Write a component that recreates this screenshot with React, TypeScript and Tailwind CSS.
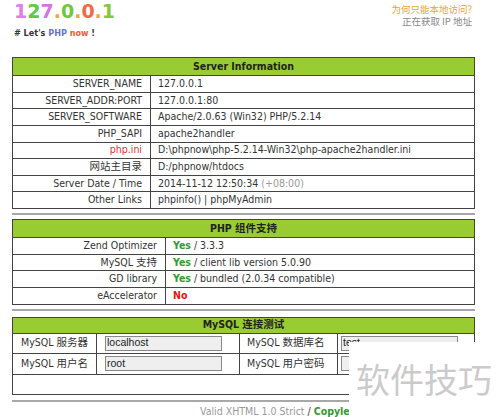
import React from "react";

const F = "font-['DejaVu_Sans_Condensed','DejaVu_Sans','Noto_Sans_CJK_SC',sans-serif]";

function Row({ label, children, labelClass = "", w }: { label: React.ReactNode; children: React.ReactNode; labelClass?: string; w: string }) {
  return (
    <div className="flex h-[16.625px] border-t border-[#444]">
      <div className={`${w} shrink-0 border-r border-[#444] flex items-center justify-end pr-[8px] ${labelClass}`}>{label}</div>
      <div className="flex-1 flex items-center pl-[7px] whitespace-nowrap">{children}</div>
    </div>
  );
}

function Header({ children }: { children: React.ReactNode }) {
  return (
    <div className="h-[17px] bg-[#99cc33] flex items-center justify-center font-bold text-[#222]">{children}</div>
  );
}

function Hr() {
  return <div className="h-[2px] bg-[#a8a8a8] w-[463px]" />;
}

function FakeInput({ value }: { value: string }) {
  return (
    <div className="h-[15px] w-[117px] border border-[#888] bg-[#efefef] flex items-center pl-[1px] font-['Liberation_Sans',Arial,sans-serif] text-[10.5px] text-[#222]">
      {value}
    </div>
  );
}

export default function App() {
  const yes = <span className="font-bold text-[#339933]">Yes</span>;
  return (
    <div className={`relative w-[500px] h-[417px] overflow-hidden bg-white text-[#333] text-[10.5px] ${F}`}>
      <div className="pl-[12px] w-[475px]">
        {/* top */}
        <div className="flex justify-between h-[57px]">
          <div className="pl-[2px]">
            <div className="font-['DejaVu_Sans',sans-serif] font-bold text-[19px] leading-[19px] mt-[2px]">
              <span className="text-[#e07ee6]">1</span>
              <span className="text-[#5cc94a]">2</span>
              <span className="text-[#d673e0]">7</span>
              <span className="text-[#f0a83a]">.</span>
              <span className="text-[#72c83a]">0</span>
              <span className="text-[#f0a83a]">.</span>
              <span className="text-[#f06a48]">0</span>
              <span className="text-[#f0a83a]">.</span>
              <span className="text-[#86c83a]">1</span>
            </div>
            <div className="font-bold text-[9px] mt-[6px] text-[#333]">
              # Let's <span className="text-[#6675b8]">PHP</span> <span className="text-[#ee5a38]">now</span> !
            </div>
          </div>
          <div className="flex flex-col items-end pr-[3px] pt-[3px] font-['Noto_Sans_CJK_SC',sans-serif] text-[9.5px]">
            <div className="h-[12px] leading-[12px] text-[#e8a63a]">为何只能本地访问?</div>
            <div className="h-[12px] leading-[12px] text-[#888]">正在获取 IP 地址</div>
          </div>
        </div>

        {/* table 1 */}
        <div className="w-[463px] border border-[#444]">
          <Header>Server Information</Header>
          <Row w="w-[138px]" label="SERVER_NAME">127.0.0.1</Row>
          <Row w="w-[138px]" label="SERVER_ADDR:PORT">127.0.0.1:80</Row>
          <Row w="w-[138px]" label="SERVER_SOFTWARE">Apache/2.0.63 (Win32) PHP/5.2.14</Row>
          <Row w="w-[138px]" label="PHP_SAPI">apache2handler</Row>
          <Row w="w-[138px]" label="php.ini" labelClass="text-[#dd3333]">D:\phpnow\php-5.2.14-Win32\php-apache2handler.ini</Row>
          <Row w="w-[138px]" label="网站主目录">D:/phpnow/htdocs</Row>
          <Row w="w-[138px]" label="Server Date / Time">
            2014-11-12 12:50:34&nbsp;<span className="text-[#999]">(+08:00)</span>
          </Row>
          <Row w="w-[138px]" label="Other Links">phpinfo() | phpMyAdmin</Row>
        </div>
        <div className="h-[4px]" />
        <Hr />
        <div className="h-[4px]" />

        {/* table 2 */}
        <div className="w-[463px] border border-[#444]">
          <Header>PHP 组件支持</Header>
          <Row w="w-[153px]" label="Zend Optimizer">{yes}&nbsp;/ 3.3.3</Row>
          <Row w="w-[153px]" label="MySQL 支持">{yes}&nbsp;/ client lib version 5.0.90</Row>
          <Row w="w-[153px]" label="GD library">{yes}&nbsp;/ bundled (2.0.34 compatible)</Row>
          <Row w="w-[153px]" label="eAccelerator"><span className="font-bold text-[#ee1111]">No</span></Row>
        </div>
        <div className="h-[4px]" />
        <Hr />
        <div className="h-[6px]" />

        {/* table 3 */}
        <div className="w-[463px] border border-[#444]">
          <div className="h-[15px] bg-[#99cc33] flex items-center justify-center font-bold text-[#222]">MySQL 连接测试</div>
          <div className="flex h-[20px] border-t border-[#444]">
            <div className="w-[84px] border-r border-[#444] flex items-center pl-[8px]">MySQL 服务器</div>
            <div className="w-[143px] border-r border-[#444] flex items-center pl-[8px]"><FakeInput value="localhost" /></div>
            <div className="w-[98px] border-r border-[#444] flex items-center pl-[7px]">MySQL 数据库名</div>
            <div className="flex-1 flex items-center pl-[3px]"><FakeInput value="test" /></div>
          </div>
          <div className="flex h-[21px] border-t border-[#444]">
            <div className="w-[84px] border-r border-[#444] flex items-center pl-[8px]">MySQL 用户名</div>
            <div className="w-[143px] border-r border-[#444] flex items-center pl-[8px]"><FakeInput value="root" /></div>
            <div className="w-[98px] border-r border-[#444] flex items-center pl-[7px]">MySQL 用户密码</div>
            <div className="flex-1 flex items-center pl-[3px]"><FakeInput value="" /></div>
          </div>
          <div className="h-[20px] border-t border-[#444]" />
        </div>
        <div className="h-[5px]" />
        <Hr />
        <div className="pl-[188px] pt-[3px] leading-[12px] whitespace-nowrap text-[10.5px]">
          <span className="text-[#999]">Valid XHTML 1.0 Strict</span> / <span className="font-bold text-[#339933]">Copyleft ! 2007 PHPnow.org</span>
        </div>
      </div>

      {/* watermark overlay */}
      <div className="absolute left-[349px] top-[342px] w-[151px] h-[75px] bg-white">
        <div className="absolute left-[7px] top-[17px] font-['Noto_Sans_CJK_SC',sans-serif] text-[34px] leading-[40px] text-[#cbcbcb] whitespace-nowrap">
          软件技巧
        </div>
      </div>
    </div>
  );
}
